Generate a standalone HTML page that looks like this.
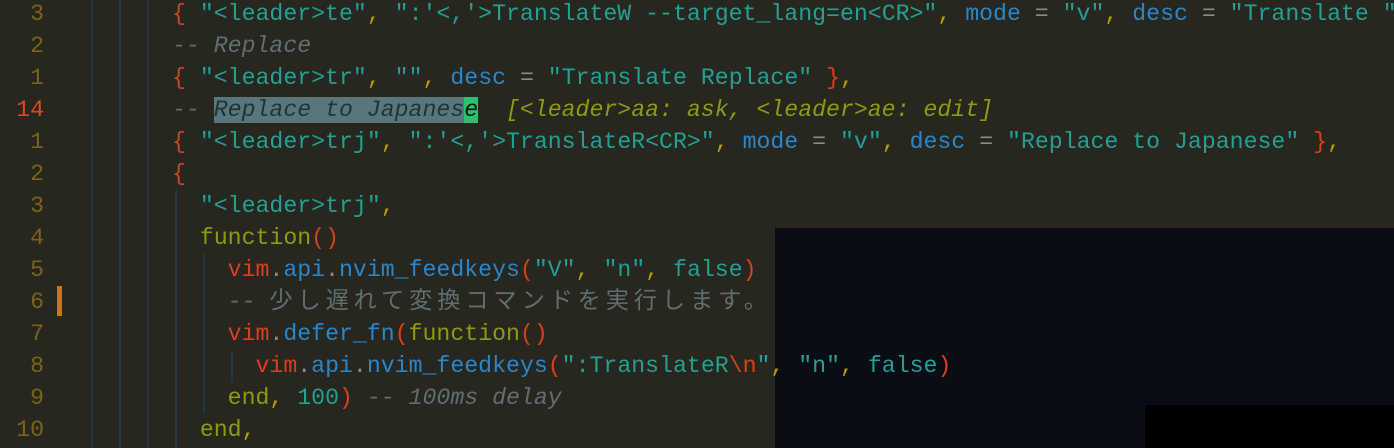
<!DOCTYPE html>
<html><head><meta charset="utf-8"><style>
html,body{margin:0;padding:0}
body{width:1394px;height:448px;overflow:hidden;background:#27271f;position:relative;font-family:"Liberation Mono","Noto Sans CJK JP",monospace;font-size:23.2px}
.l{position:absolute;left:0;height:32px;line-height:32px;white-space:pre;z-index:2}
.n{position:absolute;width:44px;text-align:right;color:#7a6418;left:0}
.t{position:absolute;left:172px}
.g{position:absolute;width:2px;background:#1d3a40;z-index:1}
.r{color:#d8401c}.s{color:#23a093}.b{color:#2a86c8}.o{color:#8f9a12}.c{color:#5f6f70;font-style:italic}.p{color:#b0a000}.w{color:#8c8c80}
.j{letter-spacing:4.9px;font-style:normal;color:#5f6f70}
</style></head><body>
<div style="position:absolute;left:775px;top:228px;width:619px;height:220px;background:#0a0c16;z-index:0"></div>
<div style="position:absolute;left:1145px;top:405px;width:249px;height:43px;background:#000;z-index:0"></div>
<div class="g" style="left:91px;top:0;height:448px"></div>
<div class="g" style="left:119px;top:0;height:448px"></div>
<div class="g" style="left:147px;top:0;height:448px"></div>
<div class="g" style="left:175px;top:190px;height:258px"></div>
<div class="g" style="left:203px;top:254px;height:160px"></div>
<div class="g" style="left:231px;top:350px;height:32px"></div>
<div style="position:absolute;left:57px;top:286px;width:5px;height:30px;background:#c87a08;z-index:2"></div>
<div class="l" style="top:-2px"><span class="n">3</span><span class="t"><span class="r">{</span> <span class="s">"&lt;leader&gt;te"</span><span class="p">,</span> <span class="s">":'&lt;,'&gt;TranslateW --target_lang=en&lt;CR&gt;"</span><span class="p">,</span> <span class="b">mode</span> <span class="w">=</span> <span class="s">"v"</span><span class="p">,</span> <span class="b">desc</span> <span class="w">=</span> <span class="s">"Translate "</span></span></div>
<div class="l" style="top:30px"><span class="n">2</span><span class="t"><span class="c">-- Replace</span></span></div>
<div class="l" style="top:62px"><span class="n">1</span><span class="t"><span class="r">{</span> <span class="s">"&lt;leader&gt;tr"</span><span class="p">,</span> <span class="s">""</span><span class="p">,</span> <span class="b">desc</span> <span class="w">=</span> <span class="s">"Translate Replace"</span> <span class="r">}</span><span class="p">,</span></span></div>
<div class="l" style="top:94px"><span class="n" style="color:#e04a1a">14</span><span class="t"><span class="c">-- </span><span class="c" style="background:#58767c;color:#1f3438">Replace to Japanes</span><span class="c" style="background:#2fbf6f;color:#0c1a10">e</span>  <span class="p" style="font-style:italic;color:#8f9a12">[&lt;leader&gt;aa: ask, &lt;leader&gt;ae: edit]</span></span></div>
<div class="l" style="top:126px"><span class="n">1</span><span class="t"><span class="r">{</span> <span class="s">"&lt;leader&gt;trj"</span><span class="p">,</span> <span class="s">":'&lt;,'&gt;TranslateR&lt;CR&gt;"</span><span class="p">,</span> <span class="b">mode</span> <span class="w">=</span> <span class="s">"v"</span><span class="p">,</span> <span class="b">desc</span> <span class="w">=</span> <span class="s">"Replace to Japanese"</span> <span class="r">}</span><span class="p">,</span></span></div>
<div class="l" style="top:158px"><span class="n">2</span><span class="t"><span class="r">{</span></span></div>
<div class="l" style="top:190px"><span class="n">3</span><span class="t">  <span class="s">"&lt;leader&gt;trj"</span><span class="p">,</span></span></div>
<div class="l" style="top:222px"><span class="n">4</span><span class="t">  <span class="o">function</span><span class="r">()</span></span></div>
<div class="l" style="top:254px"><span class="n">5</span><span class="t">    <span class="r">vim</span><span class="w">.</span><span class="b">api</span><span class="w">.</span><span class="b">nvim_feedkeys</span><span class="r">(</span><span class="s">"V"</span><span class="p">,</span> <span class="s">"n"</span><span class="p">,</span> <span class="s">false</span><span class="r">)</span></span></div>
<div class="l" style="top:286px"><span class="n">6</span><span class="t">    <span class="c" style="font-style:normal">-- </span><span class="j">少し遅れて変換コマンドを実行します。</span></span></div>
<div class="l" style="top:318px"><span class="n">7</span><span class="t">    <span class="r">vim</span><span class="w">.</span><span class="b">defer_fn</span><span class="r">(</span><span class="o">function</span><span class="r">()</span></span></div>
<div class="l" style="top:350px"><span class="n">8</span><span class="t">      <span class="r">vim</span><span class="w">.</span><span class="b">api</span><span class="w">.</span><span class="b">nvim_feedkeys</span><span class="r">(</span><span class="s">":TranslateR</span><span class="r">\n</span><span class="s">"</span><span class="p">,</span> <span class="s">"n"</span><span class="p">,</span> <span class="s">false</span><span class="r">)</span></span></div>
<div class="l" style="top:382px"><span class="n">9</span><span class="t">    <span class="o">end</span><span class="p">,</span> <span class="s">100</span><span class="r">)</span> <span class="c">-- 100ms delay</span></span></div>
<div class="l" style="top:414px"><span class="n">10</span><span class="t">  <span class="o">end</span><span class="p">,</span></span></div>
</body></html>
